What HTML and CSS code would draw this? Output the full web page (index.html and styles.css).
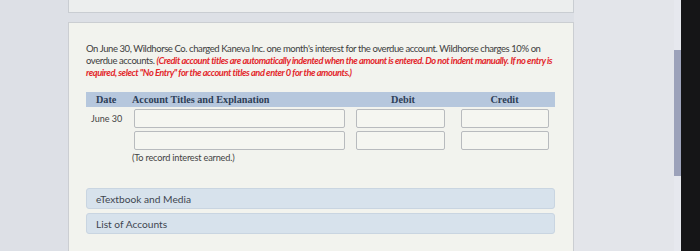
FILE: index.html
```html
<!DOCTYPE html>
<html lang="en">
<head>
    <meta charset="UTF-8">
    <meta name="viewport" content="width=device-width, initial-scale=1.0">
    <title>Journal Entry</title>
    <link rel="stylesheet" href="styles.css">
</head>
<body>

    <div class="side-left"></div>

    <main class="page">
        <div class="top-card"></div>

        <section class="question-card">
            <p class="question">
                On June 30, Wildhorse Co. charged Kaneva Inc. one month's interest for the overdue account. Wildhorse charges 10% on<br>
                overdue accounts. <span class="note">(Credit account titles are automatically indented when the amount is entered. Do not indent manually. If no entry is</span><br>
                <span class="note">required, select "No Entry" for the account titles and enter 0 for the amounts.)</span>
            </p>

            <div class="journal">
                <div class="journal-head">
                    <div class="col-date">Date</div>
                    <div class="col-account">Account Titles and Explanation</div>
                    <div class="col-debit">Debit</div>
                    <div class="col-credit">Credit</div>
                </div>
                <div class="journal-row">
                    <div class="col-date date-text">June 30</div>
                    <div class="col-account"><input type="text" class="field field-account"></div>
                    <div class="col-debit"><input type="text" class="field field-debit"></div>
                    <div class="col-credit"><input type="text" class="field field-credit"></div>
                </div>
                <div class="journal-row">
                    <div class="col-date"></div>
                    <div class="col-account"><input type="text" class="field field-account"></div>
                    <div class="col-debit"><input type="text" class="field field-debit"></div>
                    <div class="col-credit"><input type="text" class="field field-credit"></div>
                </div>
                <div class="explain">(To record interest earned.)</div>
            </div>

            <div class="link-bar">eTextbook and Media</div>
            <div class="link-bar">List of Accounts</div>
        </section>
    </main>

    <div class="side-right"></div>
    <div class="scrollbar"><div class="thumb"></div></div>
    <div class="bezel"></div>

</body>
</html>
```

FILE: styles.css
```css
body {
    margin: 0;
    height: 251px;
    overflow: hidden;
    display: flex;
    font-family: Lato, "Open Sans", sans-serif;
    background-color: #dde0e6;
    color: #3b3b3b;
}
.side-left {
    width: 68px;
    flex-shrink: 0;
}
.page {
    width: 506px;
    flex-shrink: 0;
    display: flex;
    flex-direction: column;
}
.top-card {
    height: 13px;
    background-color: #eceeee;
    border: 1px solid #c9cdd2;
    border-top: none;
    box-sizing: border-box;
}
.question-card {
    margin-top: 9px;
    padding: 20px 18px 14px 17px;
    background-color: #f2f3ee;
    border: 1px solid #cbced2;
    border-bottom: none;
    flex: 1;
}
.question {
    margin: 0;
    font-size: 9.5px;
    line-height: 12px;
    letter-spacing: -0.42px;
    white-space: nowrap;
    color: #3d3d3d;
}
.note {
    color: #e3262b;
    font-weight: bold;
    font-style: italic;
    font-size: 9.3px;
    letter-spacing: -0.45px;
}
.journal {
    margin-top: 13px;
    width: 469px;
}
.journal-head,
.journal-row {
    display: grid;
    grid-template-columns: 46px 220px 102px 101px;
    align-items: center;
}
.journal-head {
    height: 15px;
    background-color: #b6c7dd;
    font-family: "Liberation Serif", serif;
    font-weight: bold;
    font-size: 10.2px;
    color: #2d3e57;
}
.journal-head .col-date {
    padding-left: 10px;
}
.journal-head .col-debit,
.journal-head .col-credit {
    text-align: center;
}
.journal-row {
    margin-top: 3px;
}
.journal-head + .journal-row {
    margin-top: 2px;
}
.date-text {
    font-size: 9px;
    padding-left: 5px;
    color: #444;
    align-self: start;
    padding-top: 4px;
}
.field {
    display: block;
    height: 19px;
    box-sizing: border-box;
    background-color: #f5f6f1;
    border: 1px solid #b8bbbe;
    border-radius: 2px;
    padding: 0;
}
.field-account {
    margin-left: 2px;
    width: 211px;
}
.field-debit {
    margin-left: 4px;
    width: 89px;
}
.field-credit {
    margin-left: 7px;
    width: 88px;
}
.explain {
    margin-top: 2px;
    padding-left: 46px;
    font-size: 9.2px;
    letter-spacing: -0.2px;
    color: #444;
}
.link-bar {
    margin-top: 4px;
    width: 469px;
    height: 21px;
    box-sizing: border-box;
    padding-left: 9px;
    display: flex;
    align-items: center;
    background-color: #d7e2ec;
    border: 1px solid #c9d5e1;
    border-radius: 3px;
    font-size: 10.2px;
    color: #3f4650;
}
.journal + .link-bar {
    margin-top: 25px;
}
.side-right {
    width: 100px;
    flex-shrink: 0;
    background-color: #e3e5ea;
}
.scrollbar {
    width: 7px;
    flex-shrink: 0;
    background-color: #e6e8ee;
}
.thumb {
    margin-top: 50px;
    height: 126px;
    background-color: #9ca2ba;
}
.bezel {
    flex: 1;
    background-color: #151517;
}
```
